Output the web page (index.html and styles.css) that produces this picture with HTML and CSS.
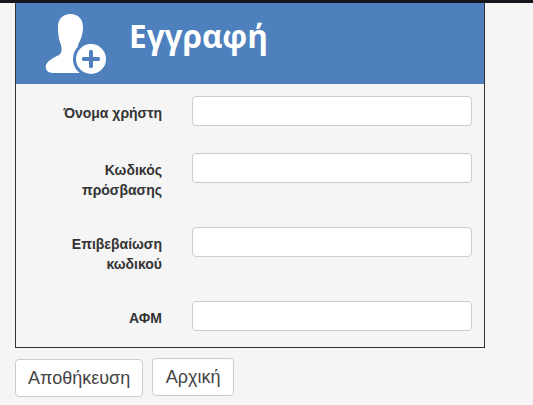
FILE: index.html
```html
<html lang="el"><head>
    <meta charset="UTF-8">
    <title>Εγγραφή</title>
    <link rel="stylesheet" href="styles.css">
</head>

<body>
    <div class="top-bar"></div>
    <div class="container">
        <div class="register-box">
            <!-- header -->
            <div class="box-header">
                <svg class="user-icon" width="64" height="64" viewBox="0 0 64 64">
                    <path fill="#fff" d="M25.500 0C33 0 38 5 38 13C38 21 35 27 33 31C33 35 35 37 40 39L44 59L8 59C2 59 0 55 1 51C3 46 10 43 14 41C17 39 17 35 16 31C14 27 13 20 13 13C13 5 18 0 25.500 0Z"/>
                    <circle cx="46" cy="45" r="18" fill="#4d80bc"/>
                    <circle cx="46" cy="45" r="15" fill="#fff"/>
                    <path fill="#4d80bc" d="M44 37.500C44 36.700 44.700 36 45.500 36L46.500 36C47.300 36 48 36.700 48 37.500L48 43L53.500 43C54.300 43 55 43.700 55 44.500L55 45.500C55 46.300 54.300 47 53.500 47L48 47L48 52.500C48 53.300 47.300 54 46.500 54L45.500 54C44.700 54 44 53.300 44 52.500L44 47L38.500 47C37.700 47 37 46.300 37 45.500L37 44.500C37 43.700 37.700 43 38.500 43L44 43Z"/>
                </svg>
                <h1>Εγγραφή</h1>
            </div>
            <!-- form -->
            <form class="box-form">
                <div class="form-row">
                    <label for="username">Όνομα χρήστη</label>
                    <input type="text" id="username">
                </div>
                <div class="form-row">
                    <label for="password">Κωδικός πρόσβασης</label>
                    <input type="password" id="password">
                </div>
                <div class="form-row">
                    <label for="confirm">Επιβεβαίωση κωδικού</label>
                    <input type="password" id="confirm">
                </div>
                <div class="form-row">
                    <label for="afm">ΑΦΜ</label>
                    <input type="text" id="afm">
                </div>
            </form>
        </div>
        <div class="button-area">
            <button class="btn btn-save">Αποθήκευση</button>
            <button class="btn btn-home">Αρχική</button>
        </div>
    </div>
</body></html>
```

FILE: styles.css
```css
body {
    margin: 0;
    background-color: #f5f5f5;
    font-family: "Liberation Sans", Arial, sans-serif;
    color: #333;
    overflow: hidden;
}

.top-bar {
    height: 3px;
    background-color: #14171c;
}

.container {
    padding-left: 15px;
}

.register-box {
    width: 470px;
    box-sizing: border-box;
    border: 1px solid #333;
    border-top: 0;
}

.box-header {
    display: flex;
    align-items: flex-start;
    height: 81px;
    padding-left: 29px;
    background-color: #4d80bc;
}

.user-icon {
    margin-top: 11px;
    flex-shrink: 0;
}

.box-header h1 {
    margin: 12px 0 0 20px;
    font-family: "Open Sans", sans-serif;
    font-size: 31.5px;
    line-height: 42px;
    font-weight: 700;
    color: #fff;
}

.box-form {
    margin: 0;
    padding: 12px 12px 16px 0;
}

.form-row {
    display: grid;
    grid-template-columns: 106px 280px;
    column-gap: 30px;
    margin-bottom: 27px;
    padding-left: 40px;
}

.form-row:last-child {
    margin-bottom: 0;
}

.form-row label {
    padding-top: 7px;
    font-size: 14px;
    line-height: 20px;
    font-weight: bold;
    text-align: right;
}

.form-row input {
    height: 30px;
    box-sizing: border-box;
    border: 1px solid #ccc;
    border-radius: 4px;
    background-color: #fff;
}

.button-area {
    display: flex;
    align-items: flex-start;
    gap: 9px;
    margin-top: 10px;
}

.btn {
    height: 38px;
    padding: 0 12px;
    border: 1px solid #ccc;
    border-radius: 4px;
    background-color: #fff;
    color: #444;
    font-family: "Liberation Sans", Arial, sans-serif;
    font-size: 18px;
}

.btn-save {
    margin-top: 1px;
}

.btn-home {
    width: 82px;
    padding: 0;
}
```
